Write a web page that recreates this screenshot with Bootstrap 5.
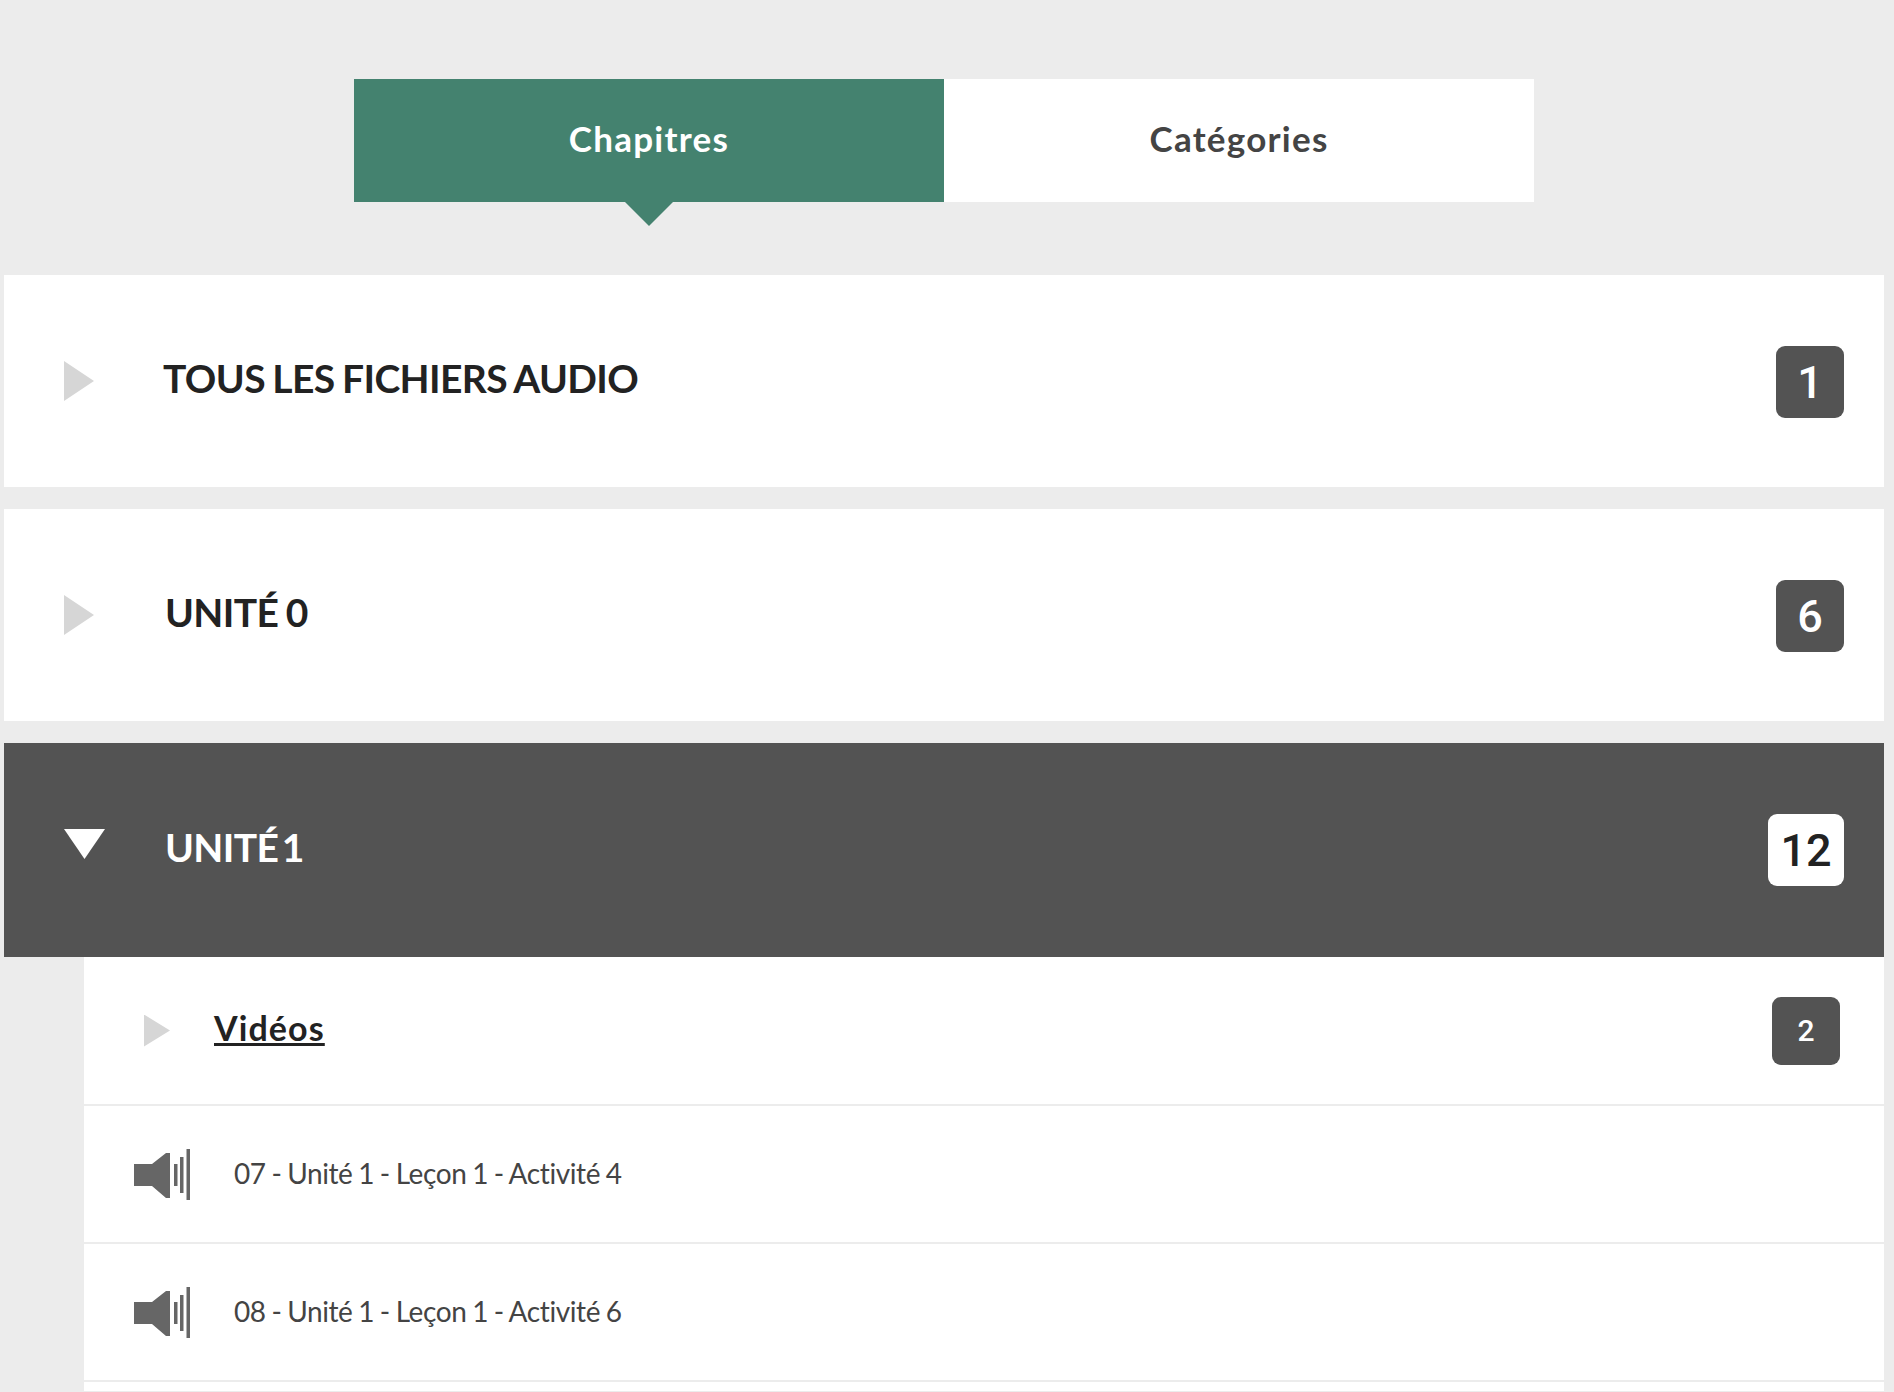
<!DOCTYPE html>
<html lang="fr">
<head>
<meta charset="utf-8">
<title>Fichiers audio</title>
<link href="https://cdn.jsdelivr.net/npm/bootstrap@5.3.0/dist/css/bootstrap.min.css" rel="stylesheet">
<style>
body{background:#ececec;font-family:"Lato","Liberation Sans",sans-serif;color:#222;}
.page-wrap{padding:79px 10px 0 4px;}
.tab-bar{width:1180px;height:123px;margin:0 auto 73px;}
.tab-bar .nav-item{flex:0 0 50%;}
.tab-bar .nav-link{height:123px;display:flex;align-items:center;justify-content:center;background:#fff;color:#444;font-size:35px;font-weight:700;letter-spacing:1.25px;border-radius:0;padding:0 0 4px;position:relative;}
.tab-bar .nav-link.active{background:#44826f;color:#fff;}
.tab-bar .nav-link.active::after{content:"";position:absolute;left:50%;top:100%;margin-left:-24px;border-style:solid;border-width:24px 24px 0;border-color:#44826f transparent transparent;}
.unit-row{height:212px;background:#fff;margin-bottom:22px;padding:0 40px 0 60px;}
.unit-row.open{height:214px;background:#535353;margin-bottom:0;color:#fff;}
.arrow-right{width:30px;height:40px;background:#d6d6d6;clip-path:polygon(0 0,100% 50%,0 100%);flex:none;}
.arrow-down{width:41px;height:30px;background:#fff;clip-path:polygon(0 0,100% 0,50% 100%);flex:none;margin-bottom:12px;}
.unit-title{font-size:39px;font-weight:700;margin:0 0 6px;line-height:1.2;letter-spacing:-.6px;word-spacing:-1.5px;}
.title-a{margin-left:69px;}
.title-b{margin-left:71px;}
.title-c{margin-left:60px;word-spacing:-5.5px;}
.count-tag{font-family:"Roboto",sans-serif;font-weight:500;font-size:45px;line-height:1;width:68px;height:72px;padding:0;border-radius:9px;background:#535353;color:#fff;display:flex;align-items:center;justify-content:center;}
.unit-row .count-tag{margin-top:2px;}
.unit-row .count-tag.light{background:#fff;color:#222;width:76px;margin-top:0;}
.count-tag.small-tag{font-size:30px;height:68px;margin-right:4px;}
.sub-list{margin-left:80px;}
.sub-list .list-group-item{background:#fff;border:0;border-bottom:2px solid #ececec;border-radius:0;padding:0 40px 0 50px;height:138px;display:flex;align-items:center;color:#444;font-size:28px;}
.sub-list .list-group-item.head{height:149px;padding-left:60px;color:#222;}
.sub-list .list-group-item.tail{height:9px;border-bottom:0;}
.arrow-small{width:26px;height:32px;}
.sub-title{font-size:34px;font-weight:700;letter-spacing:1.1px;text-decoration:underline;color:#222;margin-left:44px;margin-bottom:6px;}
.speaker{width:56px;height:51px;flex:none;filter:blur(.4px);}
.track-name{margin-left:44px;margin-bottom:2px;letter-spacing:-.4px;word-spacing:-1px;}
</style>
</head>
<body class="vh-100 overflow-hidden">
<div class="page-wrap">
  <ul class="nav nav-fill tab-bar">
    <li class="nav-item"><a class="nav-link active" href="#">Chapitres</a></li>
    <li class="nav-item"><a class="nav-link" href="#">Catégories</a></li>
  </ul>

  <div class="unit-row d-flex align-items-center">
    <span class="arrow-right"></span>
    <h2 class="unit-title title-a">TOUS LES FICHIERS AUDIO</h2>
    <span class="badge count-tag ms-auto">1</span>
  </div>
  <div class="unit-row d-flex align-items-center">
    <span class="arrow-right"></span>
    <h2 class="unit-title title-b">UNITÉ 0</h2>
    <span class="badge count-tag ms-auto">6</span>
  </div>
  <div class="unit-row open d-flex align-items-center">
    <span class="arrow-down"></span>
    <h2 class="unit-title title-c">UNITÉ 1</h2>
    <span class="badge count-tag light ms-auto">12</span>
  </div>

  <ul class="list-group sub-list">
    <li class="list-group-item head">
      <span class="arrow-right arrow-small"></span>
      <a class="sub-title" href="#">Vidéos</a>
      <span class="badge count-tag small-tag ms-auto">2</span>
    </li>
    <li class="list-group-item">
      <svg class="speaker" viewBox="0 0 56 51" fill="#666"><path d="M0 15H18L32 4H36V49H32L18 37H0Z"/><rect x="40" y="15" width="3.5" height="22"/><rect x="46" y="8" width="3.5" height="36"/><rect x="52.5" y="0" width="3.5" height="51"/></svg>
      <span class="track-name">07 - Unité 1 - Leçon 1 - Activité 4</span>
    </li>
    <li class="list-group-item">
      <svg class="speaker" viewBox="0 0 56 51" fill="#666"><path d="M0 15H18L32 4H36V49H32L18 37H0Z"/><rect x="40" y="15" width="3.5" height="22"/><rect x="46" y="8" width="3.5" height="36"/><rect x="52.5" y="0" width="3.5" height="51"/></svg>
      <span class="track-name">08 - Unité 1 - Leçon 1 - Activité 6</span>
    </li>
    <li class="list-group-item tail"></li>
  </ul>
</div>
<script src="https://cdn.jsdelivr.net/npm/bootstrap@5.3.0/dist/js/bootstrap.bundle.min.js"></script>
</body>
</html>
